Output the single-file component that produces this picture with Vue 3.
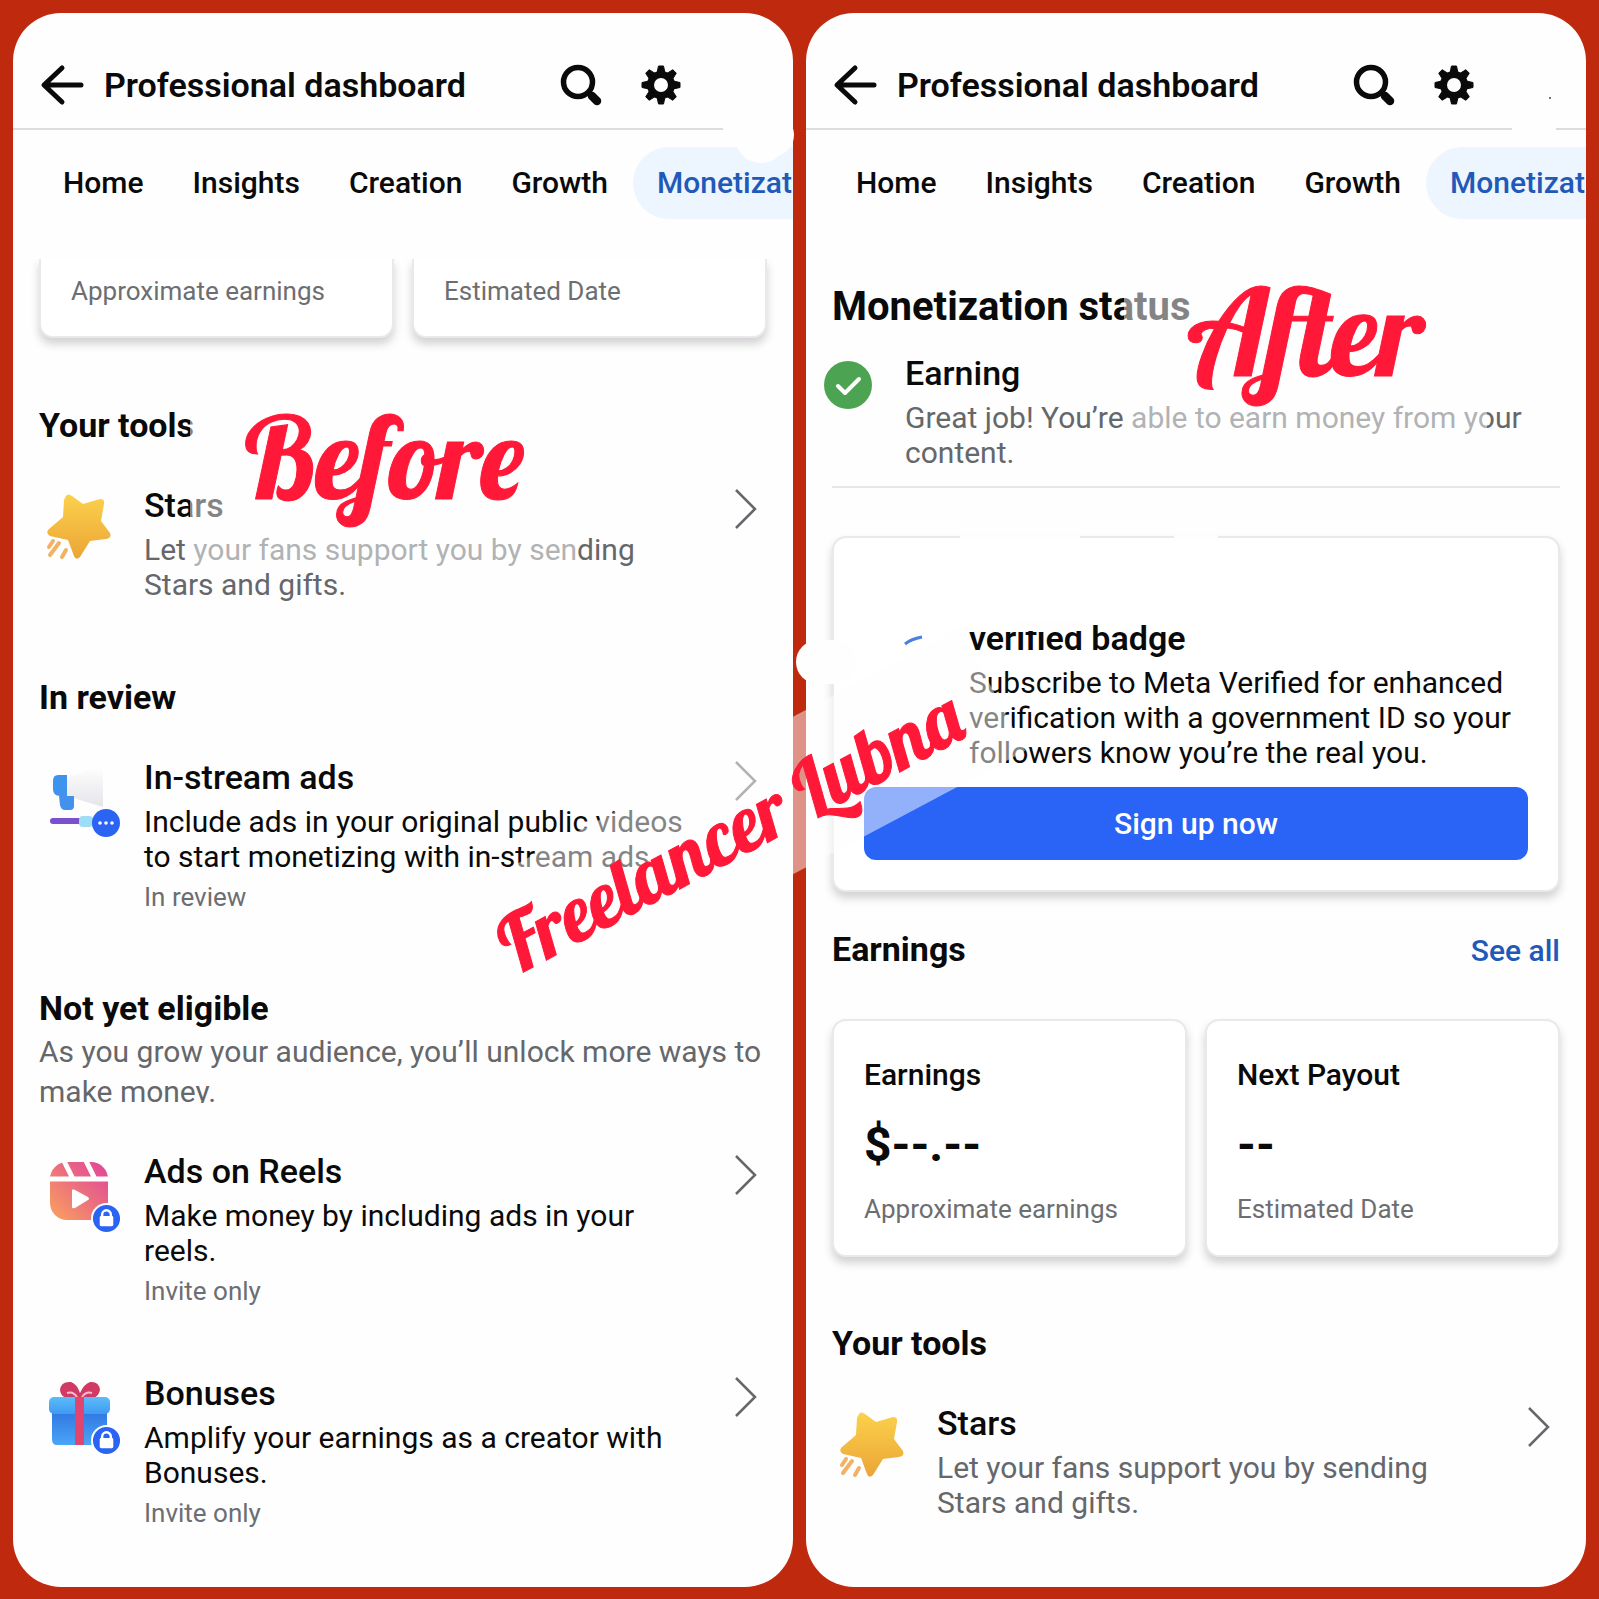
<script setup>
const tabs = ['Home', 'Insights', 'Creation', 'Growth']

const reviewTools = [
  {
    icon: 'ads',
    title: 'In-stream ads',
    lines: ['Include ads in your original public videos', 'to start monetizing with in-stream ads.'],
    note: 'In review'
  }
]

const lockedTools = [
  {
    icon: 'reels',
    title: 'Ads on Reels',
    lines: ['Make money by including ads in your', 'reels.'],
    note: 'Invite only'
  },
  {
    icon: 'gift',
    title: 'Bonuses',
    lines: ['Amplify your earnings as a creator with', 'Bonuses.'],
    note: 'Invite only'
  }
]
</script>

<template>
  <svg class="defs" width="0" height="0" aria-hidden="true">
    <defs>
      <linearGradient id="starFill" x1="0" y1="0" x2="0" y2="1">
        <stop offset="0" stop-color="#fbd14c" />
        <stop offset="1" stop-color="#eba536" />
      </linearGradient>
      <linearGradient id="reelFill" x1="0" y1="1" x2="1" y2="0">
        <stop offset="0" stop-color="#fba35c" />
        <stop offset="0.55" stop-color="#ea6c80" />
        <stop offset="1" stop-color="#e0449c" />
      </linearGradient>
      <linearGradient id="boxFill" x1="0" y1="0" x2="0" y2="1">
        <stop offset="0" stop-color="#2f72e0" />
        <stop offset="1" stop-color="#4aa6f8" />
      </linearGradient>
      <linearGradient id="lidFill" x1="0" y1="0" x2="0" y2="1">
        <stop offset="0" stop-color="#5cbcf9" />
        <stop offset="1" stop-color="#3f9af2" />
      </linearGradient>
      <linearGradient id="hornFill" x1="0" y1="0" x2="0" y2="1">
        <stop offset="0" stop-color="#ffffff" />
        <stop offset="1" stop-color="#e4e4ea" />
      </linearGradient>
      <symbol id="back" viewBox="0 0 44 44">
        <path d="M22 5L4 22L22 39M5 22H41" fill="none" stroke="#0a0a0a" stroke-width="5" stroke-linecap="round" stroke-linejoin="round" />
      </symbol>
      <symbol id="search" viewBox="0 0 44 44">
        <circle cx="19" cy="19" r="14.5" fill="none" stroke="#0a0a0a" stroke-width="5.5" />
        <path d="M30 30L32 32" fill="none" stroke="#0a0a0a" stroke-width="5" />
        <path d="M33 33L38 38" fill="none" stroke="#0a0a0a" stroke-width="8.5" stroke-linecap="round" />
      </symbol>
      <symbol id="gear" viewBox="0 0 44 44">
        <circle cx="22" cy="22" r="10.5" fill="none" stroke="#0a0a0a" stroke-width="7" />
        <g fill="#0a0a0a" stroke="#0a0a0a" stroke-width="1" stroke-linejoin="round">
          <path d="M18 10L19.500 3H24.500L26 10Z" />
          <path d="M18 10L19.500 3H24.500L26 10Z" transform="rotate(45 22 22)" />
          <path d="M18 10L19.500 3H24.500L26 10Z" transform="rotate(90 22 22)" />
          <path d="M18 10L19.500 3H24.500L26 10Z" transform="rotate(135 22 22)" />
          <path d="M18 10L19.500 3H24.500L26 10Z" transform="rotate(180 22 22)" />
          <path d="M18 10L19.500 3H24.500L26 10Z" transform="rotate(225 22 22)" />
          <path d="M18 10L19.500 3H24.500L26 10Z" transform="rotate(270 22 22)" />
          <path d="M18 10L19.500 3H24.500L26 10Z" transform="rotate(315 22 22)" />
        </g>
      </symbol>
      <symbol id="chevron" viewBox="0 0 24 44">
        <path d="M2 3L21 22L2 41" fill="none" stroke="#65676b" stroke-width="2.500" />
      </symbol>
      <symbol id="star" viewBox="5 0 76 76" overflow="visible">
        <path d="M22 3Q24 0 28 3L39 11L56 6Q61 6 60 11L57 28L66 40Q68 45 62 46L46 48L36 64Q32 68 30 63L24 47L6 43Q1 40 5 36L19 24L20 7Z" fill="url(#starFill)" />
        <path d="M9 48L5 54M15 50L6 62M22 57L18 64" stroke="#f1b266" stroke-width="4" stroke-linecap="round" />
      </symbol>
      <symbol id="lock" viewBox="0 0 32 32">
        <circle cx="16" cy="16" r="15" fill="#2b63f2" stroke="#fff" stroke-width="2" />
        <path d="M11.500 15V12a4.500 4.500 0 0 1 9 0V15" fill="none" stroke="#fff" stroke-width="2.500" />
        <rect x="9" y="13.500" width="14" height="10.500" rx="1.500" fill="#fff" />
      </symbol>
      <symbol id="ads" viewBox="0 0 76 76">
        <path d="M18 12L54 1V42L18 31Z" fill="url(#hornFill)" />
        <path d="M9 10H18V31H11Q4 31 4 24V16Q4 10 9 10Z" fill="#3d93ee" />
        <path d="M10 31H25V41Q25 45 21 45H16Q12 45 11 40Z" fill="#4291ec" />
        <rect x="1" y="53" width="34" height="6" rx="3" fill="#7a4fd0" />
        <rect x="30" y="51" width="14" height="11" rx="4" fill="#9fdcf6" />
        <circle cx="57" cy="58" r="14" fill="#2b63f2" />
        <circle cx="51" cy="58" r="1.800" fill="#fff" />
        <circle cx="57" cy="58" r="1.800" fill="#fff" />
        <circle cx="63" cy="58" r="1.800" fill="#fff" />
      </symbol>
      <symbol id="reels" viewBox="0 0 76 76">
        <rect x="1" y="3" width="58" height="58" rx="17" fill="url(#reelFill)" />
        <path d="M0 20H60M14 0L24 20M36 0L46 20" stroke="#fff" stroke-width="5" />
        <path d="M23 32Q23 29 26 31L39 38Q41 40 39 41L26 49Q23 50 23 48Z" fill="#fff" />
        <use href="#lock" x="42" y="44" width="31" height="31" />
      </symbol>
      <symbol id="gift" viewBox="0 0 76 76">
        <path d="M31 18Q12 20 11 9Q12 0 22 1Q28 3 31 12Q35 3 41 1Q50 0 51 9Q49 20 31 18Z" fill="#d23a66" />
        <path d="M18 12Q24 10 28 16M43 12Q37 10 33 16" fill="none" stroke="#f6c0cf" stroke-width="2" />
        <path d="M3 28H58V58Q58 64 52 64H8Q3 64 3 58Z" fill="url(#boxFill)" />
        <rect x="0" y="16" width="61" height="17" rx="5" fill="url(#lidFill)" />
        <rect x="26" y="16" width="9" height="48" fill="#e0456f" />
        <use href="#lock" x="42" y="44" width="31" height="31" />
      </symbol>
    </defs>
  </svg>

  <main class="board">
    <section class="panel">
      <header class="bar">
        <button class="icon-btn" aria-label="Back"><svg><use href="#back" /></svg></button>
        <h1>Professional dashboard</h1>
        <button class="icon-btn" aria-label="Search"><svg><use href="#search" /></svg></button>
        <button class="icon-btn" aria-label="Settings"><svg><use href="#gear" /></svg></button>
      </header>
      <nav class="tabs">
        <a v-for="t in tabs" :key="t" href="#">{{ t }}</a>
        <a href="#" class="active">Monetization</a>
      </nav>
      <div class="body">
        <div class="cards cut">
          <article class="card"><p class="small">Approximate earnings</p></article>
          <article class="card"><p class="small">Estimated Date</p></article>
        </div>

        <h2 class="after-cards">Your tools</h2>
        <article class="tool first">
          <svg class="tool-icon"><use href="#star" /></svg>
          <div class="tool-text">
            <h3>Stars</h3>
            <p class="muted">Let your fans support you by sending<br />Stars and gifts.</p>
          </div>
          <svg class="chevron"><use href="#chevron" /></svg>
        </article>

        <h2 class="gap-lg">In review</h2>
        <article v-for="t in reviewTools" :key="t.title" class="tool first">
          <svg class="tool-icon"><use :href="'#' + t.icon" /></svg>
          <div class="tool-text">
            <h3>{{ t.title }}</h3>
            <p>{{ t.lines[0] }}<br />{{ t.lines[1] }}</p>
            <p class="small">{{ t.note }}</p>
          </div>
          <svg class="chevron"><use href="#chevron" /></svg>
        </article>

        <h2 class="gap-lg">Not yet eligible</h2>
        <p class="intro muted">As you grow your audience, you’ll unlock more ways to<br />make money.<i class="smudge tail"></i></p>
        <article v-for="t in lockedTools" :key="t.title" class="tool locked">
          <svg class="tool-icon"><use :href="'#' + t.icon" /></svg>
          <div class="tool-text">
            <h3>{{ t.title }}</h3>
            <p>{{ t.lines[0] }}<br />{{ t.lines[1] }}</p>
            <p class="small">{{ t.note }}</p>
          </div>
          <svg class="chevron"><use href="#chevron" /></svg>
        </article>
      </div>
      <i class="smudge corner"></i>
      <i class="smudge corner-low"></i>
      <div class="sticker before"><span>Before</span></div>
    </section>

    <section class="panel">
      <header class="bar">
        <button class="icon-btn" aria-label="Back"><svg><use href="#back" /></svg></button>
        <h1>Professional dashboard</h1>
        <button class="icon-btn" aria-label="Search"><svg><use href="#search" /></svg></button>
        <button class="icon-btn" aria-label="Settings"><svg><use href="#gear" /></svg></button>
      </header>
      <nav class="tabs">
        <a v-for="t in tabs" :key="t" href="#">{{ t }}</a>
        <a href="#" class="active">Monetization</a>
      </nav>
      <div class="body">
        <h2 class="status-title">Monetization status</h2>
        <div class="status">
          <svg class="check" viewBox="0 0 48 48">
            <circle cx="24" cy="24" r="24" fill="#4ca453" />
            <path d="M14 25L21 32L35 18" fill="none" stroke="#fff" stroke-width="4" stroke-linecap="round" stroke-linejoin="round" />
          </svg>
          <div class="tool-text">
            <h3>Earning</h3>
            <p class="muted">Great job! You’re able to earn money from your<br />content.</p>
          </div>
        </div>

        <article class="card verify">
          <svg class="verify-mark" viewBox="0 0 24 24"><path d="M3 14Q9 9 20 7" fill="none" stroke="#4a7fe0" stroke-width="3" /></svg>
          <div class="verify-text">
            <h3>verified badge</h3>
            <p>Subscribe to Meta Verified for enhanced<br />verification with a government ID so your<br />followers know you’re the real you.</p>
          </div>
          <button class="cta">Sign up now</button>
          <i class="smudge edge-a"></i>
          <i class="smudge edge-b"></i>
          <i class="smudge edge-c"></i>
          <i class="smudge dots"></i>
        </article>

        <div class="row">
          <h2>Earnings</h2>
          <a href="#">See all</a>
        </div>
        <div class="cards">
          <article class="card">
            <h4>Earnings</h4>
            <strong>$--.--</strong>
            <p class="small">Approximate earnings</p>
          </article>
          <article class="card">
            <h4>Next Payout</h4>
            <strong>--</strong>
            <p class="small">Estimated Date</p>
          </article>
        </div>

        <h2 class="after-cards">Your tools</h2>
        <article class="tool first">
          <svg class="tool-icon"><use href="#star" /></svg>
          <div class="tool-text">
            <h3>Stars</h3>
            <p class="muted">Let your fans support you by sending<br />Stars and gifts.</p>
          </div>
          <svg class="chevron"><use href="#chevron" /></svg>
        </article>
      </div>
      <i class="smudge line-gap"></i>
      <i class="speck"></i>
      <div class="sticker after"><span>After</span></div>
    </section>

    <div class="sticker name"><span>Freelancer Lubna</span></div>
  </main>
</template>

<style>
body {
  margin: 0;
  background: #bf290e;
}
</style>

<style scoped>
.defs {
  position: absolute;
}
.board {
  position: relative;
  display: grid;
  grid-template-columns: 1fr 1fr;
  gap: 13px;
  padding: 13px;
  background: #bf290e;
  font-family: Roboto, "Noto Sans", sans-serif;
  color: #0a0a0a;
}
.panel {
  position: relative;
  min-width: 0;
  background: #fefefe;
  border-radius: 48px;
}
h1, h2, h3, h4, p {
  margin: 0;
}
.bar {
  display: flex;
  align-items: center;
  height: 117px;
  padding: 29px 110px 0 27px;
  box-sizing: border-box;
  border-bottom: 2px solid #dcdcdc;
}
h1 {
  flex: 1;
  margin-left: 20px;
  font-size: 34px;
  line-height: 40px;
  font-weight: 600;
}
.icon-btn {
  width: 44px;
  height: 44px;
  padding: 0;
  border: 0;
  background: none;
}
.icon-btn + .icon-btn {
  margin-left: 36px;
}
.icon-btn svg {
  display: block;
  width: 44px;
  height: 44px;
}
.tabs {
  display: flex;
  gap: 1px;
  margin-top: 17px;
  padding-left: 26px;
  overflow: hidden;
}
.tabs a {
  flex: none;
  padding: 0 24px;
  border-radius: 36px;
  color: #0a0a0a;
  font-size: 30px;
  line-height: 72px;
  font-weight: 500;
  text-decoration: none;
}
.tabs .active {
  color: #2159b8;
  background: #edf5fe;
}
.body {
  padding: 0 26px 58px;
}
h2 {
  font-size: 34px;
  line-height: 40px;
  font-weight: 700;
}
h3 {
  margin-bottom: 5px;
  font-size: 34px;
  line-height: 44px;
  font-weight: 500;
}
p {
  font-size: 30px;
  line-height: 35px;
}
.muted {
  color: #65676b;
}
.small {
  color: #6c6e72;
  font-size: 26px;
  line-height: 32px;
}
.cards {
  display: grid;
  grid-template-columns: 1fr 1fr;
  gap: 18px;
}
.card {
  padding: 36px 30px 30px;
  border: 2px solid #ebe8eb;
  border-radius: 14px;
  background: #fff;
  box-shadow: 0 6px 8px rgba(60, 50, 60, 0.22);
}
.cut {
  margin: 40px -16px 0;
  padding: 0 16px 16px;
  overflow: hidden;
}
.cut .card {
  padding-top: 16px;
  padding-bottom: 29px;
  border-top: 0;
  border-radius: 0 0 14px 14px;
}
.card h4 {
  font-size: 30px;
  line-height: 36px;
  font-weight: 500;
}
.card strong {
  display: block;
  margin: 28px 0 24px;
  font-size: 48px;
  line-height: 48px;
  font-weight: 700;
}
.after-cards {
  margin-top: 66px;
}
.cut + .after-cards {
  margin-top: 51px;
}
.tool {
  display: flex;
  padding: 0 9px 0 10px;
}
.first {
  margin-top: 38px;
}
.tool-icon {
  flex: none;
  width: 76px;
  height: 76px;
  margin: 10px 19px 0 0;
  overflow: visible;
}
.tool-text {
  flex: 1;
}
.tool-text .small {
  margin-top: 7px;
}
.chevron {
  flex: none;
  width: 24px;
  height: 44px;
  margin-top: 4px;
}
.gap-lg {
  margin-top: 75px;
}
.intro {
  position: relative;
  margin-top: 4px;
  line-height: 40px;
}
.locked {
  margin-top: 37px;
}
.locked + .locked {
  margin-top: 64px;
}
.status-title {
  margin-top: 68px;
  font-size: 40px;
  line-height: 40px;
}
.status {
  display: flex;
  margin-top: 24px;
  padding-bottom: 16px;
  border-bottom: 2px solid #e6e6e6;
}
.check {
  flex: none;
  width: 48px;
  height: 48px;
  margin: 10px 33px 0 -8px;
}
.verify {
  position: relative;
  display: flex;
  flex-wrap: wrap;
  margin-top: 48px;
  padding: 78px 30px 30px;
}
.verify-mark {
  width: 24px;
  height: 24px;
  margin: 14px 43px 0 38px;
}
.verify-text {
  flex: 1;
}
.verify-text h3 {
  font-weight: 600;
}
.cta {
  width: 100%;
  height: 73px;
  margin-top: 17px;
  border: 0;
  border-radius: 12px;
  background: #2964f6;
  color: #fff;
  font: 500 30px Roboto, sans-serif;
}
.row {
  display: flex;
  justify-content: space-between;
  margin: 37px 0 46px;
}
.row a {
  color: #2159b8;
  font-size: 30px;
  line-height: 44px;
  font-weight: 500;
  text-decoration: none;
}
.smudge {
  position: absolute;
  background: #fefefe;
}
.corner {
  top: 100px;
  right: -1px;
  width: 74px;
  height: 44px;
  border-radius: 0 22px 22px 44px;
}
.corner-low {
  top: 100px;
  right: 6px;
  width: 52px;
  height: 50px;
  border-radius: 0 0 26px 26px;
}
.tail {
  top: 71px;
  left: 148px;
  width: 20px;
  height: 12px;
}
.line-gap {
  top: 114px;
  right: 30px;
  width: 44px;
  height: 4px;
}
.speck {
  position: absolute;
  top: 84px;
  right: 35px;
  width: 2px;
  height: 2px;
  background: #777;
}
.edge-a {
  top: -3px;
  left: 126px;
  width: 120px;
  height: 4px;
}
.edge-b {
  top: -3px;
  left: 340px;
  width: 44px;
  height: 4px;
}
.edge-c {
  top: 102px;
  left: -38px;
  width: 60px;
  height: 44px;
  border-radius: 22px;
}
.dots {
  top: 83px;
  left: 180px;
  width: 69px;
  height: 10px;
}
.sticker {
  position: absolute;
  box-sizing: border-box;
  display: flex;
  align-items: center;
  justify-content: center;
  background: rgba(254, 254, 254, 0.5);
  color: #ff1838;
  font-family: Lobster, "Liberation Serif", serif;
  font-weight: 400;
  white-space: nowrap;
  -webkit-text-stroke: 1px #ff1838;
}
.before {
  top: 359px;
  left: 177px;
  width: 388px;
  height: 196px;
  padding-bottom: 28px;
  font-size: 113px;
}
.after {
  top: 242px;
  left: 318px;
  width: 363px;
  height: 180px;
  padding-bottom: 28px;
  font-size: 120px;
}
.name {
  top: 758px;
  left: calc(50% - 361px);
  width: 588px;
  height: 139px;
  padding-right: 8px;
  font-size: 78px;
  transform: rotate(-28deg);
}
</style>
